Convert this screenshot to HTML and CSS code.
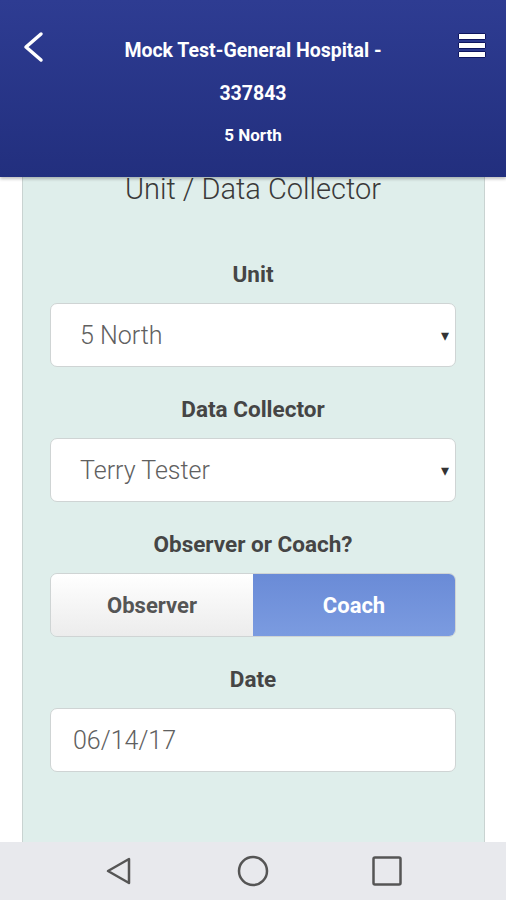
FILE: index.html
```html
<!DOCTYPE html>
<html lang="en">
<head>
  <meta charset="UTF-8">
  <title>Unit / Data Collector</title>
  <meta name="viewport" content="width=device-width, initial-scale=1.0">
  <link rel="stylesheet" href="styles.css">
</head>
<body>

<div class="screen">

  <!-- TOP BAR -->
  <header class="topbar">
    <button class="icon-btn back-btn" aria-label="Back">
      <svg width="24" height="32" viewBox="0 0 24 32">
        <polyline points="19,3 4,16 19,29" fill="none" stroke="#fff" stroke-width="3.5" stroke-linecap="round" stroke-linejoin="round"/>
      </svg>
    </button>
    <div class="topbar-title">
      <p class="hospital">Mock Test-General Hospital - 337843</p>
      <p class="unit-name">5 North</p>
    </div>
    <button class="icon-btn menu-btn" aria-label="Menu">
      <span></span><span></span><span></span>
    </button>
  </header>

  <!-- FORM -->
  <main class="content">
    <div class="panel">
      <h2 class="panel-title">Unit / Data Collector</h2>

      <label class="field-label">Unit</label>
      <div class="select">
        <span class="select-value">5 North</span>
        <span class="caret">&#9662;</span>
      </div>

      <label class="field-label">Data Collector</label>
      <div class="select">
        <span class="select-value">Terry Tester</span>
        <span class="caret">&#9662;</span>
      </div>

      <label class="field-label">Observer or Coach?</label>
      <div class="toggle">
        <button class="toggle-btn">Observer</button>
        <button class="toggle-btn active">Coach</button>
      </div>

      <label class="field-label">Date</label>
      <input class="date-input" type="text" value="06/14/17">
    </div>
  </main>

  <!-- ANDROID NAV -->
  <nav class="sysnav">
    <svg width="32" height="32" viewBox="0 0 32 32">
      <polygon points="5,16 26,4 26,28" fill="none" stroke="#555" stroke-width="2.5" stroke-linejoin="round"/>
    </svg>
    <svg width="32" height="32" viewBox="0 0 32 32">
      <circle cx="16" cy="16" r="14" fill="none" stroke="#555" stroke-width="2.5"/>
    </svg>
    <svg width="32" height="32" viewBox="0 0 32 32">
      <rect x="2.5" y="2.5" width="27" height="27" rx="1.5" fill="none" stroke="#555" stroke-width="2.5"/>
    </svg>
  </nav>

</div>

</body>
</html>
```

FILE: styles.css
```css
body {
  margin: 0;
  font-family: Roboto, "Liberation Sans", Arial, sans-serif;
  background: #fff;
}

.screen {
  height: 900px;
  display: flex;
  flex-direction: column;
  overflow: hidden;
}

/* top bar */
.topbar {
  height: 177px;
  flex-shrink: 0;
  display: flex;
  align-items: flex-start;
  background: linear-gradient(#2e3c92, #222f7e);
  box-shadow: 0 2px 3px rgba(0,0,0,0.25);
  position: relative;
  z-index: 2;
  color: #fff;
}

.icon-btn {
  background: none;
  border: none;
  padding: 0;
  cursor: pointer;
  flex-shrink: 0;
}

.back-btn {
  margin: 31px 0 0 22px;
  width: 26px;
}

.back-btn svg { display: block; }

.menu-btn {
  margin: 33px 20px 0 0;
  width: 28px;
  display: flex;
  flex-direction: column;
  gap: 2px;
}

.menu-btn span {
  display: block;
  height: 7px;
  background: #fff;
  border: 1px solid #0e1660;
  border-radius: 1px;
  box-sizing: border-box;
}

.topbar-title {
  flex: 1;
  text-align: center;
  padding: 29px 56px 0;
}

.topbar-title p { margin: 0; font-weight: bold; }

.hospital {
  font-size: 19.5px;
  line-height: 43px;
}

.unit-name {
  font-size: 17px;
  line-height: 20px;
  margin-top: 10px !important;
}

/* content */
.content {
  flex: 1;
  overflow: hidden;
}

.panel {
  margin: 0 21px 0 22px;
  height: 100%;
  background: #dfeeeb;
  border-left: 1px solid #c9d3d1;
  border-right: 1px solid #c9d3d1;
  padding: 0 28px 0 27px;
  box-sizing: border-box;
  display: flex;
  flex-direction: column;
}

.panel-title {
  margin: 0 0 59px;
  font-size: 29px;
  font-weight: 300;
  line-height: 24px;
  color: #3a3a3a;
  text-align: center;
}

.field-label {
  display: block;
  text-align: center;
  font-size: 22.5px;
  font-weight: bold;
  line-height: 28px;
  color: #454545;
  margin-bottom: 15px;
}

.select, .date-input, .toggle {
  height: 64px;
  box-sizing: border-box;
  border: 1px solid #cfd4d4;
  border-radius: 7px;
  margin-bottom: 28px;
  flex-shrink: 0;
}

.select {
  background: #fff;
  display: flex;
  align-items: center;
  justify-content: space-between;
  padding: 0 6px 0 29px;
}

.select-value, .date-input {
  font-size: 25px;
  font-weight: 300;
  color: #606060;
}

.caret {
  font-size: 16px;
  color: #333;
}

.toggle {
  display: flex;
  overflow: hidden;
}

.toggle-btn {
  flex: 1;
  border: none;
  font-family: inherit;
  font-size: 22px;
  font-weight: bold;
  color: #555;
  background: linear-gradient(#fff, #ececec);
  cursor: pointer;
}

.toggle-btn.active {
  color: #fff;
  background: linear-gradient(#6a8bd7, #7b9be0);
}

.date-input {
  width: 100%;
  background: #fff;
  font-family: inherit;
  padding: 0 22px;
  outline: none;
}

/* android nav */
.sysnav {
  height: 58px;
  flex-shrink: 0;
  background: #e8e9ed;
  display: flex;
  align-items: center;
  justify-content: center;
  gap: 102px;
}

.sysnav svg { display: block; }
```
